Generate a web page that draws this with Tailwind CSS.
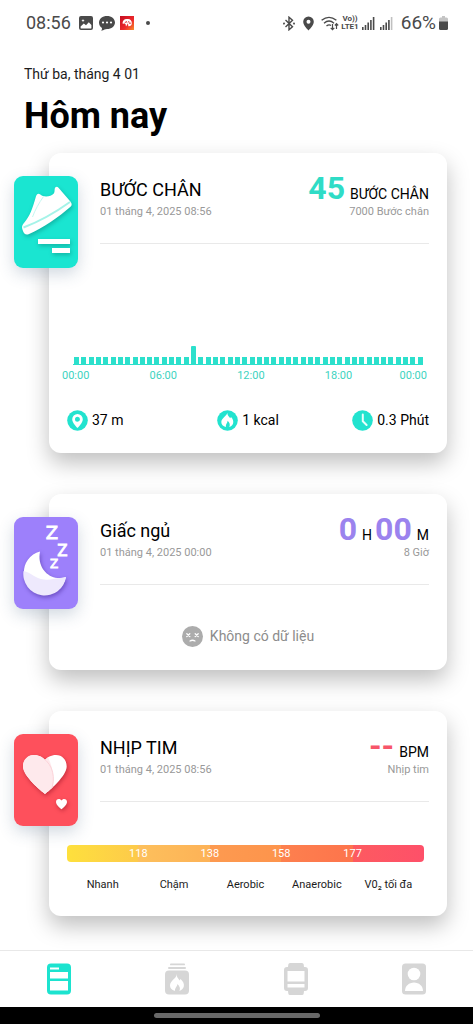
<!DOCTYPE html>
<html lang="vi">
<head>
<meta charset="utf-8">
<meta name="viewport" content="width=device-width, initial-scale=1">
<title>Hôm nay</title>
<script src="https://cdn.jsdelivr.net/npm/@tailwindcss/browser@4"></script>
</head>
<body class="flex min-h-screen flex-col bg-white font-['Roboto','Noto_Sans',sans-serif] text-black">

<!-- System status bar -->
<div class="flex h-[46px] items-center justify-between pl-[26px] pr-[25px] text-[#4a4a4a]">
  <div class="flex items-center">
    <span class="text-[18px] leading-6">08:56</span>
    <svg class="ml-2 h-[14px] w-[14px]" viewBox="0 0 14 14"><path fill="currentColor" fill-rule="evenodd" d="M2 0h10a2 2 0 0 1 2 2v10a2 2 0 0 1-2 2H2a2 2 0 0 1-2-2V2a2 2 0 0 1 2-2zM1.600 10.500V12q0 .4.400.4h10q.4 0 .4-.4V9L9.800 6.300 7 9.300 4.800 7.500zM4 3l-.5 1.100-1.100.5 1.100.5L4 6.200l.5-1.100 1.100-.5-1.100-.5z"/></svg>
    <svg class="ml-[6px] h-[15px] w-4" viewBox="0 0 16 15"><path fill="currentColor" d="M8 0c4.400 0 8 2.700 8 6.500S12.400 13 8 13c-.9 0-1.700.2-2.500.6-1 .6-1.900 1.200-3.300 1.200.6-.8.9-1.700.8-2.800C1.200 10.800 0 8.900 0 6.500 0 2.700 3.600 0 8 0z"/><circle cx="4" cy="6.500" r="1.100" fill="#fff"/><circle cx="8" cy="6.500" r="1.100" fill="#fff"/><circle cx="12" cy="6.500" r="1.100" fill="#fff"/></svg>
    <svg class="ml-[5px] h-[14px] w-[14px]" viewBox="0 0 14 14"><defs><linearGradient id="app" x2="1" y2="1"><stop stop-color="#c40c20"/><stop offset=".6" stop-color="#ee2a2c"/><stop offset="1" stop-color="#f9902c"/></linearGradient></defs><path fill="url(#app)" d="M0 0h14v14H0z"/><path fill="#fff" d="M2.500 7.500C2.500 4.500 4.500 2.500 7.500 3c2.500-.3 4.500 1.500 4.300 4C12 9.500 10 10.500 8.300 10.200L8 7.200 6 10.500 5.500 8z"/><path fill="none" stroke="#e02028" stroke-width=".8" d="M4.500 7.500l1.800-2.200.7 1.500M8.500 5l1 2.500 1.500-.5"/></svg>
    <span class="ml-3 h-1 w-1 rounded-full bg-[#4a4a4a]"></span>
  </div>
  <div class="flex items-center">
    <svg class="h-[15px] w-3" viewBox="0 0 12 15" fill="none" stroke="currentColor" stroke-width="1.400"><path d="M2.500 4l7 6.700L6 13.800V1.200L9.500 4.300l-7 6.700"/><circle cx="1" cy="7.500" r=".4"/><circle cx="11" cy="7.500" r=".4"/></svg>
    <svg class="ml-2 h-[15px] w-[11px]" viewBox="0 0 11 15"><path fill="currentColor" fill-rule="evenodd" d="M5.500.5A5.300 5.300 0 0 1 10.800 5.800C10.800 9.500 5.500 14.500 5.500 14.500S.2 9.500.2 5.800A5.300 5.300 0 0 1 5.500.5zm0 3.300a2 2 0 1 0 0 4 2 2 0 0 0 0-4z"/></svg>
    <svg class="ml-[7px] h-[15px] w-[18px]" viewBox="0 0 18 15" fill="none" stroke="currentColor" stroke-width="1.400"><path d="M.6 4.300Q8 -1.600 15.400 4.300M3 7.200Q8 3 13 7.200M5.500 10Q8 8 10 9.500"/><path stroke-width="1.200" d="M11.500 8v5.500M9.700 11.800l1.800 1.900 1.800-1.900M15.500 13V8M13.900 9.500l1.600-1.800 1.700 1.800"/></svg>
    <span class="ml-0.5 flex flex-col items-center text-[8px] leading-[8px] font-bold"><span>Vo))</span><span>LTE1</span></span>
    <svg class="ml-[3px] h-[14px] w-[13px]" viewBox="0 0 13 14" fill="currentColor"><path d="M0 11h1.600v3H0zM2.700 9h1.600v5H2.700zM5.400 6.500H7V14H5.400zM8.100 4h1.600v10H8.100zM10.800 1h1.600v13h-1.600z"/></svg>
    <svg class="ml-[5px] h-[14px] w-[13px]" viewBox="0 0 13 14" fill="currentColor"><path d="M0 11h1.600v3H0zM2.700 9h1.600v5H2.700zM5.400 6.500H7V14H5.400zM8.100 4h1.600v10H8.100z"/><path opacity=".35" d="M10.800 1h1.600v13h-1.600z"/></svg>
    <span class="ml-2 text-[19px] leading-6">66%</span>
    <svg class="ml-[3px] h-[14px] w-[9px]" viewBox="0 0 9 14"><path fill="#c4c4c4" d="M3 0h3v1.500h1.500Q9 1.500 9 3v4H0V3q0-1.500 1.500-1.500H3z"/><path fill="currentColor" d="M0 5.500h9v7q0 1.500-1.500 1.500h-6Q0 14 0 12.500z"/></svg>
  </div>
</div>

<header class="px-6 pt-[18px]">
  <p class="text-[14px] leading-5 text-[#1c1c1c]">Thứ ba, tháng 4 01</p>
  <h1 class="mt-3 text-[36px] leading-10 font-bold">Hôm nay</h1>
</header>

<main class="flex flex-1 flex-col gap-[41px] pt-[17px] pr-[26px] pb-[34px] pl-[49px]">

  <!-- Steps -->
  <section class="relative rounded-xl bg-white px-[18px] pb-[22px] shadow-[0_10px_22px_rgba(0,0,0,0.25)]">
    <div class="absolute top-[23px] -left-[35px] h-[92px] w-16 rounded-[9px] bg-[#1ae5d1] shadow-[0_6px_16px_rgba(50,80,120,0.22)]">
      <svg class="h-full w-full" viewBox="0 0 64 92">
        <g class="drop-shadow-[1px_2px_2px_rgba(0,90,80,0.35)]">
          <path fill="#fff" d="M26 18.300C30 22 37 20.500 39.800 17.500 41.300 15.500 40 12.500 41.500 11.300 42.500 10.300 43.500 10.600 44.500 11.800L56.800 26C58 28 58 29.500 56.500 30.800 45 41 29 52 14.500 58.300 11.500 59.300 9.800 57.500 8.800 54.500 7.500 51.500 7.800 49.500 10 47 16 40 18.500 32 21.500 22 22.500 18 24 17 26 18.300z"/>
          <rect x="24" y="63" width="32" height="5" fill="#fff"/><rect x="38" y="72" width="18" height="5" fill="#fff"/>
        </g>
        <path fill="none" stroke="#a5f3e8" stroke-width="2" d="M9.500 51.500C24 46 42 36 56 26"/>
        <path fill="none" stroke="#c4f8f1" stroke-width="1" d="M29.500 20.500C25 27 21 34 18.500 41"/>
      </svg>
    </div>
    <div class="ml-[33px] flex h-[91px] justify-between border-b border-[#e9e9e9]">
      <div class="pt-[22px]">
        <h2 class="text-[18px] leading-[29px]">BƯỚC CHÂN</h2>
        <p class="text-[11px] leading-4 text-[#999]">01 tháng 4, 2025 08:56</p>
      </div>
      <div class="pt-[19px] text-right">
        <p class="flex h-8 items-baseline justify-end gap-[5px] text-[14px] leading-8"><strong class="text-[32px] text-[#2fdcc6]">45</strong>BƯỚC CHÂN</p>
        <p class="text-[11px] leading-4 text-[#999]">7000 Bước chân</p>
      </div>
    </div>
    <div class="mx-[6px] flex h-[121px] items-end justify-between border-b border-[#2ce0cc] pl-px" id="steps-chart"></div>
    <div class="mt-px mr-[2px] -ml-[5px] flex text-[11px] leading-5 text-[#40d3c0]">
      <span class="w-[24%]">00:00</span><span class="w-[24%]">06:00</span><span class="w-[24%]">12:00</span><span class="flex-1">18:00</span><span>00:00</span>
    </div>
    <div class="mt-6 grid grid-cols-3 text-[14px] leading-[21px]">
      <div class="flex items-center gap-1">
        <svg class="h-[21px] w-[21px]" viewBox="0 0 21 21"><circle cx="10.500" cy="10.500" r="10.300" fill="#22e3cf"/><path fill="#fff" fill-rule="evenodd" d="M10.500 4a5.300 5.300 0 0 1 5.300 5.200c0 3.800-5.300 8.800-5.300 8.800S5.200 13 5.200 9.200A5.300 5.300 0 0 1 10.500 4zm0 2.700a2.500 2.500 0 1 0 0 5 2.500 2.500 0 0 0 0-5z"/></svg>37 m
      </div>
      <div class="flex items-center justify-center gap-1">
        <svg class="h-[21px] w-[21px]" viewBox="0 0 21 21"><circle cx="10.500" cy="10.500" r="10.300" fill="#22e3cf"/><path fill="#fff" d="M10.300 3C10.500 5.500 12 6.500 13.200 8.200L14 7C16 9 16.800 11.500 16 13.700 15.500 15.300 14 16.500 12.300 17 13.500 14.500 12.500 12.500 10.500 10.800 10.700 13 8.500 14 9 17 6 16.500 4.300 14.500 4.300 12 4.300 9.700 6 8.500 7 7.200 8.300 5.800 9.800 5 10.300 3z"/></svg>1 kcal
      </div>
      <div class="flex items-center justify-end gap-1">
        <svg class="h-[21px] w-[21px]" viewBox="0 0 21 21"><circle cx="10.500" cy="10.500" r="10.300" fill="#22e3cf"/><path fill="none" stroke="#e8fffc" stroke-width="2" stroke-linecap="round" stroke-linejoin="round" d="M10.800 4.500v6.800l3.800 3.700"/></svg>0.3 Phút
      </div>
    </div>
  </section>

  <!-- Sleep -->
  <section class="relative rounded-xl bg-white px-[18px] pb-[23px] shadow-[0_10px_22px_rgba(0,0,0,0.25)]">
    <div class="absolute top-[23px] -left-[35px] h-[92px] w-16 rounded-[9px] bg-[#9d80fb] shadow-[0_6px_16px_rgba(50,80,120,0.22)]">
      <svg class="h-full w-full" viewBox="0 0 64 92">
        <g fill="#fff" stroke="#fff" stroke-width=".8" text-anchor="middle" font-family="DejaVu Sans">
          <text x="38" y="22" font-size="18">Z</text><text x="48.500" y="38.500" font-size="15">Z</text><text x="40" y="51" font-size="12">Z</text>
        </g>
        <g class="drop-shadow-[1px_2px_2px_rgba(50,20,130,0.45)]">
          <path fill="#fff" d="M26 34.500A21.300 21.300 0 1 0 52 60C37 65 22.500 52 26 34.500z"/>
          <path fill="#eee9fd" d="M9.500 54C17 55 21 62 30 62.500 36 63.500 40 61.500 45.500 61 48 61 50 60.600 52 60A21.300 21.300 0 0 1 9.500 54z"/>
        </g>
      </svg>
    </div>
    <div class="ml-[33px] flex h-[91px] justify-between border-b border-[#e9e9e9]">
      <div class="pt-[22px]">
        <h2 class="text-[18px] leading-[29px]">Giấc ngủ</h2>
        <p class="text-[11px] leading-4 text-[#999]">01 tháng 4, 2025 00:00</p>
      </div>
      <div class="pt-[19px] text-right">
        <p class="flex h-8 items-baseline justify-end gap-[5px] text-[14px] leading-8"><strong class="text-[32px] text-[#9b83ee]">0</strong>H<strong class="-ml-0.5 text-[32px] text-[#9b83ee]">00</strong>M</p>
        <p class="text-[11px] leading-4 text-[#999]">8 Giờ</p>
      </div>
    </div>
    <div class="mt-[41px] flex items-center justify-center gap-[7px] text-[14px] leading-[21px] text-[#8c8c8c]">
      <svg class="h-[21px] w-[21px]" viewBox="0 0 21 21"><circle cx="10.500" cy="10.500" r="10.500" fill="#acacac"/><path fill="none" stroke="#fff" stroke-width="1.300" stroke-linecap="round" d="M4.800 7.700l3 2.800M7.800 7.700l-3 2.800M13.200 7.700l3 2.800M16.200 7.700l-3 2.800M8 15q2.500-1.500 5 0"/></svg>Không có dữ liệu
    </div>
  </section>

  <!-- Heart rate -->
  <section class="relative rounded-xl bg-white px-[18px] pb-[23px] shadow-[0_10px_22px_rgba(0,0,0,0.25)]">
    <div class="absolute top-[23px] -left-[35px] h-[92px] w-16 rounded-[9px] bg-[#fe505c] shadow-[0_6px_16px_rgba(50,80,120,0.22)]">
      <svg class="h-full w-full" viewBox="0 0 64 92">
        <defs><clipPath id="heart"><path d="M31 60C27 57 9 42 9 32.500 9 25.500 14 21 20 21 25 21 29 23.500 31 26 33 23.500 37 21 42 21 48 21 52.700 25.500 52.700 32.500 52.700 42 35 57 31 60z"/></clipPath></defs>
        <g class="drop-shadow-[1px_2px_2px_rgba(120,0,20,0.4)]">
          <g clip-path="url(#heart)"><path fill="#fff" d="M0 0h64v92H0z"/><path fill="#fee9ec" d="M0 0H20C35 22 44 38 37 60H0z"/><path fill="none" stroke="#fbd3d8" d="M29 24C39 31 42 44 37 57"/></g>
          <path fill="#fff" d="M47.500 75.300C46 74 42 70.800 42 68 42 66.200 43.200 65 44.800 65 46 65 47 65.600 47.500 66.500 48 65.600 49 65 50.200 65 51.800 65 53 66.200 53 68 53 70.800 49 74 47.500 75.300z"/>
        </g>
      </svg>
    </div>
    <div class="ml-[33px] flex h-[91px] justify-between border-b border-[#e9e9e9]">
      <div class="pt-[22px]">
        <h2 class="text-[18px] leading-[29px]">NHỊP TIM</h2>
        <p class="text-[11px] leading-4 text-[#999]">01 tháng 4, 2025 08:56</p>
      </div>
      <div class="pt-[19px] text-right">
        <p class="flex h-8 items-baseline justify-end gap-[5px] text-[14px] leading-8"><strong class="text-[32px] text-[#f7566a]">--</strong>BPM</p>
        <p class="text-[11px] leading-4 text-[#999]">Nhịp tim</p>
      </div>
    </div>
    <div class="mr-[5px]">
      <div class="relative mt-[43px]">
        <div class="grid h-[17px] grid-cols-5 overflow-hidden rounded-sm">
          <span class="bg-linear-to-r from-[#fee03c] to-[#fdca4a]"></span>
          <span class="bg-linear-to-r from-[#fdc05c] to-[#fdb257]"></span>
          <span class="bg-linear-to-r from-[#fd9a50] to-[#fd944c]"></span>
          <span class="bg-linear-to-r from-[#fd804e] to-[#fd744c]"></span>
          <span class="bg-linear-to-r from-[#fd5a60] to-[#fe5069]"></span>
        </div>
        <div class="absolute inset-0 grid grid-cols-4 px-[10%] text-center text-[11px] leading-[17px] text-white">
          <span>118</span><span>138</span><span>158</span><span>177</span>
        </div>
      </div>
      <div class="mt-[15px] grid grid-cols-5 text-center text-[11px] leading-4 whitespace-nowrap text-[#1c1c1c]">
        <span>Nhanh</span><span>Chậm</span><span>Aerobic</span><span>Anaerobic</span><span>V0₂ tối đa</span>
      </div>
    </div>
  </section>
</main>

<nav class="grid h-[57px] grid-cols-4 border-t border-[#e8e8e8] bg-white text-[#d6d6d6]">
  <button aria-label="Hôm nay" class="flex items-center justify-center">
    <svg class="h-8 w-6" viewBox="0 0 24 32"><path fill="#1ce3cf" fill-rule="evenodd" d="M4 .5h16a4 4 0 0 1 4 4v23a4 4 0 0 1-4 4H4a4 4 0 0 1-4-4v-23a4 4 0 0 1 4-4zM3 4.500v2h9v-2zM3 9v6.500h18V9zM3 18v9.500h18V18z"/></svg>
  </button>
  <button aria-label="Hoạt động" class="flex items-center justify-center">
    <svg class="h-8 w-6" viewBox="0 0 24 32"><g fill="currentColor"><rect x="5" y=".5" width="15" height="1.800" rx=".9"/><rect x="3" y="4" width="18" height="2" rx="1"/><rect y="7.500" width="24" height="24" rx="4"/></g><path fill="#fff" d="M11.700 11C11.500 14 13 15 14.500 17.500L15.500 16C18 18.500 19.500 20.500 18.800 23.500 18.300 25.800 16.500 27.300 14.300 28 15.800 25.500 14.500 23 12.300 21 12.500 23.500 9.500 25 10 28 6.500 27 5 25 5 22.500 5 20 6.500 18.500 7.800 17 9.700 15 11.500 14 11.700 11z"/></svg>
  </button>
  <button aria-label="Thiết bị" class="flex items-center justify-center">
    <svg class="h-8 w-6" viewBox="0 0 24 32"><path fill="currentColor" fill-rule="evenodd" d="M6 0h12q1.500 0 1.700 1.500L20 4h1q3 0 3 3v18q0 3-3 3h-1l-.3 2.500Q19.500 32 18 32H6q-1.500 0-1.700-1.500L4 28H3q-3 0-3-3V7q0-3 3-3h1l.3-2.500Q4.500 0 6 0zM3.500 8v10.500h17V8zm0 13v3.500h17V21z"/></svg>
  </button>
  <button aria-label="Hồ sơ" class="flex items-center justify-center">
    <svg class="h-8 w-6" viewBox="0 0 24 32"><rect y=".5" width="24" height="31" rx="3.500" fill="currentColor"/><circle cx="12" cy="11" r="6.300" fill="#fff"/><path fill="#fff" d="M3 28c0-5 4-8.500 9-8.500s9 3.500 9 8.500z"/></svg>
  </button>
</nav>
<div class="flex h-[17px] items-center justify-center bg-black"><span class="h-[5px] w-[166px] rounded-full bg-[#686868]"></span></div>

<script>
  // One bar for each half hour of the day; the only steps fall at 08:00.
  const chart = document.getElementById('steps-chart');
  for (let i = 0; i < 48; i++) {
    const bar = document.createElement('span');
    bar.className = i === 16 ? 'h-[18px] w-[5px] rounded-t-[1px] bg-[#2ce0cc]' : 'h-[7px] w-[5px] bg-[#2ce0cc]';
    chart.append(bar);
  }
</script>
</body>
</html>
